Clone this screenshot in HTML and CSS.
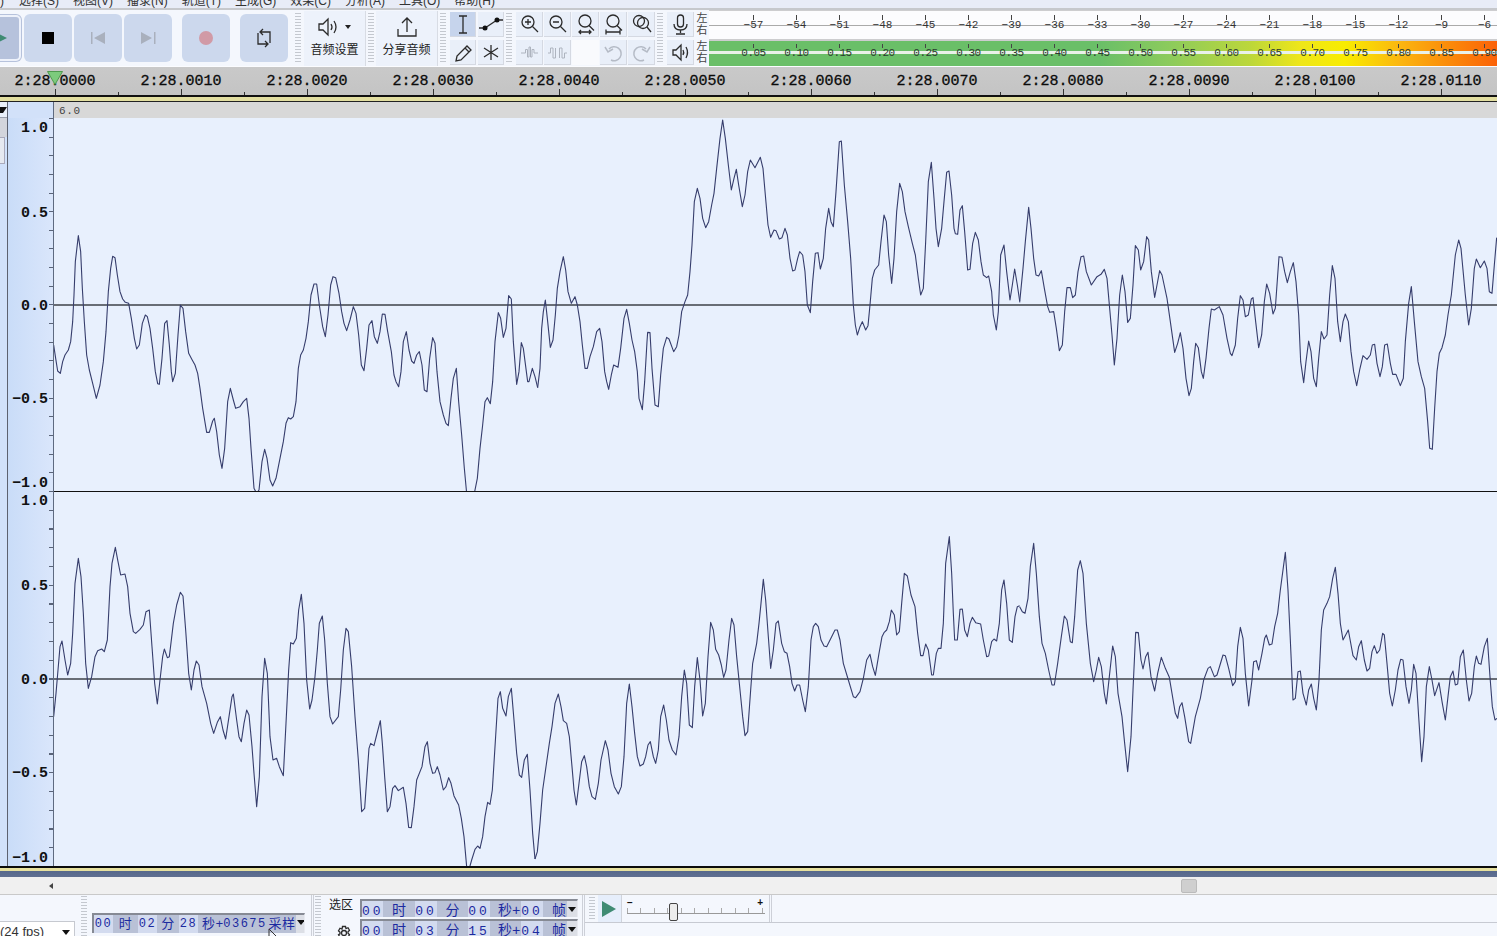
FILE: index.html
```html
<!DOCTYPE html>
<html lang="zh">
<head>
<meta charset="utf-8">
<title>Audacity</title>
<link rel="stylesheet" href="styles.css">
</head>
<body>
<div class="app">
  <nav class="menubar">
    <span class="menu-stub">)</span><span>选择(S)</span><span>视图(V)</span><span>播录(N)</span><span>轨道(T)</span><span>生成(G)</span><span>效果(C)</span><span>分析(A)</span><span>工具(O)</span><span>帮助(H)</span>
  </nav>

  <div class="toolbar">
    <div class="transport">
      <button class="tbtn tbtn-play"><svg width="48" height="48" viewBox="0 0 48 48"><path class="green" d="M23 19l10 5-10 5z"/></svg></button>
      <button class="tbtn"><svg width="48" height="48" viewBox="0 0 48 48"><rect x="18" y="18" width="12" height="12" fill="#000"/></svg></button>
      <button class="tbtn"><svg width="48" height="48" viewBox="0 0 48 48"><path class="dim" d="M17 18h1.500v12H17zM31 18v12l-11-6z"/></svg></button>
      <button class="tbtn"><svg width="48" height="48" viewBox="0 0 48 48"><path class="dim" d="M30 18h1.500v12H30zM17 18v12l11-6z"/></svg></button>
      <button class="tbtn tbtn-rec"><svg width="48" height="48" viewBox="0 0 48 48"><circle cx="24" cy="24" r="7" fill="#d19aa6"/></svg></button>
      <button class="tbtn"><svg width="48" height="48" viewBox="0 0 48 48"><path class="ic" d="M21 18h9v11M27 30h-9V19M23 15l-3 3 3 3M25 27l3 3-3 3"/></svg></button>
    </div>
    <div class="grip"></div>
    <button class="bigbtn">
      <svg width="40" height="24" viewBox="0 0 40 24"><path class="ic" d="M4 9h4l5-5v16l-5-5H4zM16 9q2 3 0 6M19 6q4 6 0 12"/><path d="M30 10h6l-3 4z" fill="#222"/></svg>
      <span>音频设置</span>
    </button>
    <div class="grip grip-narrow"></div>
    <button class="bigbtn">
      <svg width="40" height="24" viewBox="0 0 40 24"><path class="ic" d="M20 17V3M15 8l5-5 5 5M11 14v7h18v-7"/></svg>
      <span>分享音频</span>
    </button>
    <div class="grip grip-wide"></div>
    <div class="tools">
      <button class="sbtn active"><svg width="26" height="25" viewBox="0 0 26 25"><path class="ic" d="M9 4h8M13 4v17M9 21h8"/></svg></button>
      <button class="sbtn"><svg width="26" height="25" viewBox="0 0 26 25"><path class="ic" d="M7 16L19 8"/><circle cx="7" cy="16" r="2.500" fill="#111"/><circle cx="19" cy="8" r="2.500" fill="#111"/><path class="ic" d="M1 16h4M21 8h4"/></svg></button>
      <button class="sbtn"><svg width="26" height="25" viewBox="0 0 26 25"><path class="ic" d="M6 21l1-5L17 6l4 4L11 20zM15 8l4 4"/></svg></button>
      <button class="sbtn"><svg width="26" height="25" viewBox="0 0 26 25"><path class="ic" d="M13 5v15M6 8l14 9M20 8L6 17"/></svg></button>
    </div>
    <div class="grip grip-wide"></div>
    <div class="zooms">
      <button class="sbtn"><svg width="27" height="25" viewBox="0 0 27 25"><circle class="ic" cx="12" cy="10" r="6"/><path class="ic" d="M16.500 14.500l5.500 5.500M9 10h6M12 7v6"/></svg></button>
      <button class="sbtn"><svg width="27" height="25" viewBox="0 0 27 25"><circle class="ic" cx="12" cy="10" r="6"/><path class="ic" d="M16.500 14.500l5.500 5.500M9 10h6"/></svg></button>
      <button class="sbtn"><svg width="27" height="25" viewBox="0 0 27 25"><circle class="ic" cx="13" cy="9" r="6"/><path class="ic" d="M17 13.500l5 5M7 20h12M9 18l-2 2 2 2M17 18l2 2-2 2"/></svg></button>
      <button class="sbtn"><svg width="27" height="25" viewBox="0 0 27 25"><circle class="ic" cx="13" cy="9" r="6"/><path class="ic" d="M17 13.500l5 5M6 20h14M6 17.500v5M20 17.500v5"/></svg></button>
      <button class="sbtn"><svg width="27" height="25" viewBox="0 0 27 25"><circle class="ic" cx="11" cy="9" r="5.500"/><circle class="ic" cx="15" cy="11" r="5.500"/><path class="ic" d="M19 15l4 5"/></svg></button>
      <button class="sbtn"><svg width="27" height="25" viewBox="0 0 27 25"><path class="ic-dim" d="M5 13h4.500V9.500h2V17h1.500V7h1.500v10h1.500V9.500h2V13h4"/></svg></button>
      <button class="sbtn"><svg width="27" height="25" viewBox="0 0 27 25"><path class="ic-dim" d="M4 13h2.500V8H9v10h2.500V8M15.500 18V8H18v10h2.500v-5H23"/></svg></button>
      <div class="sgap"></div>
      <button class="sbtn"><svg width="27" height="25" viewBox="0 0 27 25"><path class="ic-dim ic-undo" d="M9 9a7 7 0 1 1 2 11M5 7l3 5 5-3"/></svg></button>
      <button class="sbtn"><svg width="27" height="25" viewBox="0 0 27 25"><path class="ic-dim ic-undo" d="M18 9a7 7 0 1 0-2 11M22 7l-3 5-5-3"/></svg></button>
    </div>
    <div class="grip"></div>
    <div class="io">
      <button class="sbtn"><svg width="27" height="25" viewBox="0 0 27 25"><rect class="ic" x="10.500" y="3" width="6" height="12" rx="3"/><path class="ic" d="M7 12q0 6 6.500 6T20 12M13.500 18v3M9 22h9"/></svg></button>
      <div class="lr"><span>左</span><span>右</span></div>
      <button class="sbtn"><svg width="27" height="25" viewBox="0 0 27 25"><path class="ic" d="M6 10h3l5-5v15l-5-5H6zM16 10q1.500 2.500 0 5M19 7q3 5.500 0 11"/></svg></button>
      <div class="lr"><span>左</span><span>右</span></div>
    </div>
    <div class="meters">
      <div class="meter meter-in">
        <span>−57</span><span>−54</span><span>−51</span><span>−48</span><span>−45</span><span>−42</span><span>−39</span><span>−36</span><span>−33</span><span>−30</span><span>−27</span><span>−24</span><span>−21</span><span>−18</span><span>−15</span><span>−12</span><span>−9</span><span>−6</span>
      </div>
      <div class="meter meter-out">
        <span>0.05</span><span>0.10</span><span>0.15</span><span>0.20</span><span>0.25</span><span>0.30</span><span>0.35</span><span>0.40</span><span>0.45</span><span>0.50</span><span>0.55</span><span>0.60</span><span>0.65</span><span>0.70</span><span>0.75</span><span>0.80</span><span>0.85</span><span>0.90</span>
      </div>
    </div>
  </div>

  <div class="timeline">
    <span>2:28.0000</span><span>2:28.0010</span><span>2:28.0020</span><span>2:28.0030</span><span>2:28.0040</span><span>2:28.0050</span><span>2:28.0060</span><span>2:28.0070</span><span>2:28.0080</span><span>2:28.0090</span><span>2:28.0100</span><span>2:28.0110</span>
    <svg class="playhead" width="16" height="14" viewBox="0 0 16 14"><path d="M.5.500h15L8 13.500z" fill="#7ccb7c" stroke="#4f9a4f"/></svg>
  </div>
  <div class="timeline-edge"></div>

  <div class="track">
    <div class="ctrl">
      <div class="ctrl-head"><i class="ctrl-caret"></i></div>
      <div class="ctrl-bar"></div>
      <div class="ctrl-btn"></div>
    </div>
    <div class="vruler">
      <div class="vhead"></div>
      <div class="vch vch-top"><b>1.0</b><b>0.5</b><b>0.0</b><b>−0.5</b><b>−1.0</b></div>
      <div class="vch vch-bot"><b>1.0</b><b>0.5</b><b>0.0</b><b>−0.5</b><b>−1.0</b></div>
    </div>
    <div class="waves">
      <div class="wave-head">6.0</div>
      <svg class="wave wave-top" width="1443" height="373" viewBox="54 118 1443 373">
        <path class="zero" d="M54 305H1497"/>
        <g transform="translate(50 115) scale(.33333)">
          <polyline points="11,690 17,730 23,768 31,775 38,740 45,720 55,705 62,680 68,620 72,540 76,440 85,362 92,410 97,520 103,620 110,720 118,765 128,805 139,850 150,810 160,740 168,650 175,530 182,460 188,424 195,428 202,480 210,530 218,552 226,562 236,565 244,610 253,670 260,702 268,690 277,625 286,600 292,605 300,640 308,700 316,770 323,806 328,808 336,730 344,625 351,617 358,690 364,770 368,800 376,775 384,660 391,570 399,580 407,650 416,715 425,732 435,750 443,775 450,820 458,880 470,952 478,952 488,918 493,910 500,950 508,1020 516,1060 524,1000 533,860 541,820 550,855 557,880 570,875 580,860 590,850 597,910 603,1000 612,1120 620,1135 627,1125 636,1040 644,1003 651,1030 660,1095 668,1113 678,1090 690,1030 700,980 708,925 715,908 722,912 730,905 738,860 745,760 752,720 760,705 768,670 775,620 783,540 792,507 800,507 808,570 818,635 826,665 834,600 842,510 849,485 857,488 867,535 875,590 882,625 890,647 900,615 910,575 918,595 926,660 934,750 942,767 950,700 957,630 966,617 973,665 982,685 990,650 997,597 1005,598 1013,650 1024,710 1032,780 1038,800 1046,815 1053,770 1060,680 1069,650 1077,705 1085,738 1092,745 1100,720 1108,710 1116,750 1123,825 1131,830 1139,730 1148,668 1155,685 1161,770 1170,860 1180,900 1188,925 1195,932 1203,850 1210,790 1219,760 1226,860 1235,960 1243,1060 1250,1135 1273,1135 1282,1090 1290,1000 1298,930 1305,860 1312,848 1321,866 1328,800 1335,680 1345,593 1352,610 1360,667 1368,640 1376,542 1384,552 1390,680 1400,808 1407,770 1414,683 1420,700 1433,800 1437,800 1447,760 1455,785 1463,818"/>
        </g>
        <g transform="translate(530 115) scale(.33333)">
          <polyline points="23,818 30,760 35,640 40,590 46,555 53,620 61,697 69,675 76,600 82,520 90,470 100,425 107,465 114,530 124,565 135,545 142,570 150,620 157,690 165,760 172,760 180,725 190,695 200,650 209,640 216,680 224,770 230,800 236,823 244,780 251,750 264,757 272,700 282,610 290,583 298,625 306,675 314,710 322,770 327,850 337,884 344,800 351,680 353,652 360,653 366,760 375,870 385,875 392,780 400,700 410,667 417,672 431,710 440,695 447,660 455,590 465,560 473,540 480,470 486,390 493,260 502,220 510,250 518,310 527,338 536,320 545,270 552,235 560,160 570,70 578,15 586,70 595,150 604,225 612,190 619,163 626,210 637,275 645,240 653,170 661,135 675,158 691,127 699,160 706,240 714,330 722,367 732,345 738,347 748,372 756,368 765,340 772,360 780,430 788,468 795,465 803,430 809,410 818,420 825,470 832,570 841,593 848,500 856,415 864,413 871,462 880,430 887,340 896,280 903,320 910,335 918,230 928,80 934,78 943,210 953,320 962,430 970,570 976,630 982,660 990,635 997,620 1007,645 1014,632 1020,570 1027,490 1034,465 1046,450 1053,380 1062,300 1069,320 1076,420 1085,505 1092,430 1100,290 1109,205 1117,230 1125,290 1135,335 1147,385 1156,420 1165,490 1172,540 1180,520 1187,380 1195,200 1204,142 1212,250 1218,340 1225,395 1235,340 1242,260 1250,172 1257,168 1265,240 1272,340 1276,356 1283,358 1290,285 1297,272 1304,350 1313,465 1320,463 1328,385 1336,352 1345,375 1353,440 1360,480 1370,488 1376,483 1385,530 1390,600 1399,645 1405,590 1412,420 1422,390 1430,470 1440,555 1447,510 1454,462 1462,510 1469,558"/>
        </g>
        <g transform="translate(1007 115) scale(.33333)">
          <polyline points="38,562 48,460 55,380 65,277 72,340 80,430 87,480 95,483 103,467 112,520 122,575 128,592 140,590 148,640 157,707 166,690 173,590 180,518 190,518 197,548 205,540 213,470 222,425 230,423 238,470 253,510 270,485 282,478 292,463 300,490 308,580 315,660 322,750 330,670 338,540 346,480 354,530 362,622 370,610 378,510 385,392 394,405 401,465 410,440 419,365 425,375 433,470 443,547 450,510 458,467 465,480 480,550 490,620 503,712 512,685 520,653 528,700 537,790 546,842 553,820 560,740 566,685 574,698 583,770 589,790 597,730 606,640 613,582 622,585 637,575 648,600 660,670 670,715 675,722 685,690 692,610 700,542 708,555 715,605 724,600 733,552 738,548 746,620 755,698 764,660 772,560 779,507 788,535 798,597 805,580 816,425 825,427 833,470 841,503 850,470 859,443 867,500 875,600 881,740 890,803 897,740 905,678 912,710 920,790 928,815 935,730 943,650 951,672 960,660 968,540 976,452 984,490 992,620 1000,680 1008,620 1015,597 1024,620 1032,710 1040,770 1049,812 1058,765 1068,722 1080,733 1090,720 1096,690 1103,688 1110,745 1119,785 1126,755 1133,690 1141,687 1150,745 1157,778 1167,778 1180,812 1189,790 1195,680 1205,565 1213,515 1222,620 1233,740 1243,785 1253,820 1262,920 1268,1000 1276,1003 1283,880 1290,770 1297,715 1305,698 1315,660 1323,600 1333,540 1345,420 1355,375 1362,400 1375,540 1385,630 1393,580 1402,460 1408,432 1420,458 1432,438 1440,460 1447,530 1455,535 1462,450 1469,368"/>
        </g>
      </svg>
      <svg class="wave wave-bot" width="1443" height="375" viewBox="54 491 1443 375">
        <path class="zero" d="M54 679H1497"/>
        <g transform="translate(50 490) scale(.33333)">
          <polyline points="11,680 18,610 24,540 30,470 36,453 45,510 53,555 62,520 68,430 75,280 85,205 93,260 100,370 107,520 115,595 125,560 135,500 143,482 155,477 163,485 172,450 180,290 186,220 196,172 204,215 212,255 225,252 233,290 240,370 250,425 257,430 270,418 280,405 288,365 298,360 306,470 314,580 322,642 330,570 338,500 343,477 352,503 358,500 370,400 380,345 391,307 399,318 407,420 416,550 424,600 432,540 439,513 447,525 456,590 470,640 482,700 491,730 502,697 511,680 519,720 527,747 537,680 546,620 550,612 560,690 567,740 574,755 582,700 590,660 597,675 606,770 612,850 620,950 628,860 636,620 644,505 652,550 660,740 669,810 680,805 688,830 700,857 708,700 716,540 722,458 730,462 739,445 746,360 754,313 762,400 770,570 779,657 786,630 795,560 802,480 808,400 817,378 824,450 832,580 840,680 848,702 865,680 872,600 880,480 888,415 895,425 905,530 915,680 925,810 935,965 944,955 950,870 957,775 962,760 972,767 980,735 991,692 997,760 1004,860 1012,965 1020,950 1028,895 1035,887 1045,902 1060,892 1068,940 1076,1012 1084,1013 1092,950 1100,870 1116,830 1125,770 1132,755 1140,820 1148,850 1155,848 1162,830 1170,855 1180,900 1188,890 1196,863 1203,880 1212,918 1226,945 1234,985 1242,1040 1250,1130 1258,1135 1265,1110 1275,1078 1283,1068 1290,1075 1298,1040 1305,980 1313,937 1320,943 1327,900 1335,770 1344,625 1351,605 1358,655 1368,678 1375,620 1384,595 1392,690 1400,790 1408,855 1415,862 1423,810 1432,793 1440,900 1448,1030 1455,1107"/>
        </g>
        <g transform="translate(530 490) scale(.33333)">
          <polyline points="15,1107 22,1085 30,1000 38,900 48,830 58,760 66,710 75,640 85,612 93,650 100,692 110,700 118,740 126,830 132,900 139,945 147,880 155,815 163,797 170,830 178,890 186,920 196,928 205,880 213,810 226,752 234,780 243,850 253,890 265,912 274,890 282,800 290,640 298,582 306,650 314,730 322,800 330,828 340,822 347,800 354,765 361,755 370,800 377,820 385,780 392,680 401,645 409,690 417,750 427,780 438,795 447,740 455,620 463,540 470,580 478,705 487,713 494,590 502,503 510,570 518,678 526,640 534,500 542,397 550,420 557,478 566,495 574,525 581,562 588,540 597,450 605,385 612,405 620,500 630,600 638,680 645,737 653,725 662,600 668,520 680,460 687,400 693,340 700,268 707,330 715,440 722,535 730,480 738,400 745,393 755,460 763,485 771,490 779,530 786,580 794,603 801,585 809,585 818,630 826,665 835,590 843,450 850,410 857,400 865,410 873,450 882,468 890,470 905,440 915,420 922,420 930,450 940,520 955,570 970,620 977,623 990,605 1000,565 1010,510 1020,493 1028,530 1036,556 1047,490 1056,440 1062,428 1070,420 1078,395 1084,360 1093,375 1100,435 1108,425 1115,340 1123,250 1132,258 1143,315 1155,350 1163,430 1172,497 1179,497 1187,462 1195,480 1205,555 1210,555 1219,490 1225,475 1233,475 1240,400 1247,220 1258,140 1265,250 1270,370 1274,450 1282,450 1290,358 1297,357 1304,420 1312,440 1320,400 1327,382 1337,398 1352,402 1360,450 1370,500 1376,498 1385,455 1392,447 1400,453 1408,400 1415,300 1422,270 1430,340 1438,450 1447,457 1455,380 1462,350 1469,347"/>
        </g>
        <g transform="translate(1007 490) scale(.33333)">
          <polyline points="38,350 46,365 54,370 63,325 70,230 80,160 88,250 97,380 105,460 115,490 125,540 135,585 142,585 152,520 163,440 172,378 180,390 190,455 196,458 203,380 212,240 220,212 228,250 238,400 250,520 260,575 268,540 275,502 283,530 292,610 298,642 307,560 317,468 325,500 333,610 345,680 353,760 362,845 372,740 378,600 386,427 394,428 402,510 408,537 416,500 423,487 432,560 443,603 452,550 463,502 475,535 487,562 495,610 505,670 512,685 518,650 525,638 533,680 545,755 551,760 565,680 580,625 590,570 603,535 610,530 622,560 630,555 648,495 655,497 665,535 677,587 685,575 692,470 700,412 708,445 715,550 725,648 735,570 740,515 748,512 755,540 765,490 773,445 778,435 787,465 795,462 803,410 812,370 820,300 835,187 843,300 850,450 858,630 865,625 873,545 880,543 888,610 898,645 905,600 913,582 920,625 928,660 936,570 943,420 950,360 960,340 968,320 977,265 985,232 993,310 1000,400 1008,450 1024,420 1038,497 1048,510 1055,470 1063,452 1072,510 1080,543 1088,535 1095,485 1102,467 1110,490 1118,480 1127,430 1132,435 1140,520 1148,610 1156,648 1165,600 1173,540 1181,508 1188,510 1197,590 1206,640 1213,600 1220,523 1227,550 1235,680 1244,815 1251,740 1258,590 1267,530 1275,570 1283,617 1296,578 1306,640 1315,690 1323,620 1330,560 1338,543 1345,585 1352,582 1360,500 1369,480 1378,570 1386,633 1394,610 1402,530 1408,498 1415,520 1422,523 1432,470 1441,445 1449,560 1456,650 1464,690 1470,685"/>
        </g>
      </svg>
    </div>
  </div>

  <div class="track-edge"></div>

  <div class="hscroll">
    <i class="scroll-left"></i>
    <i class="scroll-thumb"></i>
  </div>

  <div class="statusbar">
    <div class="rate"><div class="rate-select">(24 fps)<i class="caret"></i></div></div>
    <div class="grip grip-low"></div>
    <div class="pos">
      <div class="tbox tbox-pos">
        <span class="lt">00</span><span>时</span><span class="lt">02</span><span>分</span><span class="lt">28</span><span class="sec">秒+</span><span class="lt num">03675</span><span class="unit-s">采样</span><span class="drop"><i class="caret"></i></span>
      </div>
    </div>
    <div class="vsep"></div>
    <div class="grip grip-low"></div>
    <div class="selection">
      <div class="sel-labels">
        <span>选区</span>
        <svg width="16" height="16" viewBox="0 0 16 16"><circle class="ic" cx="8" cy="8" r="2.500"/><path class="ic" d="M6.500 1.500h3l.5 2 2-.8 1.500 2.600-1.500 1.400v1.600l1.500 1.400-1.500 2.600-2-.8-.5 2h-3l-.5-2-2 .8-1.500-2.600L4 8.800V7.200L2.500 5.800 4 3.200l2 .8z"/></svg>
      </div>
      <div class="sel-boxes">
        <div class="tbox tbox-sel">
          <span class="lt">00</span><span>时</span><span class="lt">00</span><span>分</span><span class="lt">00</span><span class="sec">秒+</span><span class="lt">00</span><span class="fr">帧</span><span class="drop"><i class="caret"></i></span>
        </div>
        <div class="tbox tbox-sel">
          <span class="lt">00</span><span>时</span><span class="lt">03</span><span>分</span><span class="lt">15</span><span class="sec">秒+</span><span class="lt">04</span><span class="fr">帧</span><span class="drop"><i class="caret"></i></span>
        </div>
      </div>
    </div>
    <div class="vsep"></div>
    <div class="playbar">
      <div class="grip grip-play"></div>
      <button class="playbtn"><svg width="24" height="26" viewBox="0 0 24 26"><path d="M4 5l14 8-14 8z" fill="#3f8b73"/></svg></button>
      <div class="slider">
        <div class="slider-signs"><span>−</span><span>+</span></div>
        <div class="slider-track"></div>
        <i class="slider-thumb"></i>
      </div>
      <div class="vsep vsep-play"></div>
      <div class="playbar-rest"></div>
    </div>
    <svg class="pointer" width="10" height="8" viewBox="0 0 10 8"><path d="M1 0v8M1 0l7 7" fill="none" stroke="#333"/></svg>
  </div>
</div>
</body>
</html>
```

FILE: styles.css
```css
* { box-sizing: border-box; }
html, body { margin: 0; padding: 0; height: 100%; overflow: hidden; background: #f4f7fd; }
body { font-family: "Liberation Sans", "Noto Sans CJK SC", sans-serif; color: #222; }
button { border: 0; padding: 0; margin: 0; font: inherit; color: inherit; display: block; }
svg { display: block; }

.app { width: 1497px; height: 936px; overflow: hidden; position: relative; display: flex; flex-direction: column; }

.ic { fill: none; stroke: #2b2b2b; stroke-width: 1.3; }
.ic-dim { fill: none; stroke: #aeb4bf; stroke-width: 1; }
.ic-undo { stroke: #b5bbc6; stroke-width: 1.500; }
.dim { fill: #a9b0bd; }
.green { fill: #3f8b73; }

/* menu */
.menubar {
  height: 10px; flex: none; overflow: hidden; display: flex; align-items: flex-end;
  background: #e8ecf7; border-bottom: 2px solid #c6c8cc; font-size: 12px; line-height: 16px; color: #333; padding-left: 19px; gap: 14px;
}
.menubar span { display: block; height: 16px; margin-bottom: -1px; white-space: nowrap; flex: none; }
.menubar .menu-stub { margin-left: -19px; margin-right: -14px; width: 19px; }

/* toolbar */
.toolbar { height: 56px; flex: none; display: flex; background: #f4f7fd; overflow: hidden; }
.transport { width: 293px; flex: none; display: flex; gap: 2px; padding-top: 4px; margin-left: -26px; flex-basis: 319px; }
.tbtn { width: 48px; height: 48px; background: #ccd8ed; border-radius: 6px; flex: none; }
.tbtn-play { background: #b6c2dc; outline: 2px solid #eef2fb; outline-offset: -3px; }
.tbtn-rec { margin-left: 8px; }
.transport .tbtn:last-child { margin-left: 8px; }
.grip { width: 10px; flex: none; position: relative; }
.grip-narrow { width: 9px; }
.grip-wide { width: 11px; }
.grip::after {
  content: ""; position: absolute; left: 2px; width: 6px; top: 3px; bottom: 2px;
  background: repeating-linear-gradient(#c4c8cf 0 1px, transparent 1px 3px);
}
.bigbtn { width: 62px; flex: none; background: #edf2fb; border-right: 1px solid #d8dce4; margin: 1px 0 0 1px; padding-top: 4px; display: flex; flex-direction: column; align-items: center; font-size: 12px; line-height: 16px; }
.bigbtn svg { margin-bottom: 3px; }
.tools { width: 55px; flex: none; display: grid; grid-template-columns: 26px 26px; gap: 3px 2px; padding: 2px 0 0 1px; align-content: start; }
.zooms { width: 140px; flex: none; display: grid; grid-template-columns: repeat(5, 27px); gap: 3px 1px; padding: 2px 0 0 1px; align-content: start; }
.sbtn { height: 25px; background: #e9eff9; border-right: 1px solid #d5d9e2; border-bottom: 1px solid #d5d9e2; }
.sbtn.active { background: #c6d4ec; }
.sgap { height: 25px; background: #f9fafd; }
.io { width: 43px; flex: none; display: grid; grid-template-columns: 27px 14px; gap: 3px 1px; padding: 2px 0 0 1px; align-content: start; margin-left: 1px; }
.lr { height: 25px; display: flex; flex-direction: column; align-items: center; justify-content: space-between; font-size: 11px; line-height: 12px; color: #444; padding: 0 0 1px; }

.meters { flex: 1; min-width: 0; display: flex; flex-direction: column; gap: 2px; padding-top: 1px; background: #cdcdcf; overflow: hidden; }
.meter { display: flex; padding-left: 23px; overflow: hidden; font-family: "Liberation Mono", monospace; font-size: 11px; color: #333; }
.meter span { width: 43px; flex: none; text-align: center; position: relative; white-space: nowrap; }
.meter span::before { content: ""; position: absolute; left: 21px; width: 1px; height: 5px; background: #444; }
.meter-in { height: 28px; background: linear-gradient(transparent 14px, #aaa 14px 15px, transparent 15px), #fcfcfe; padding-top: 8px; line-height: 12px; }
.meter-in span::before { top: -4px; }
.meter-out {
  height: 25px; padding-top: 6px; line-height: 12px; letter-spacing: -.5px; color: #2c3a30;
  background: linear-gradient(transparent 10px, #e9f1e9 10px 13px, transparent 13px),
    linear-gradient(90deg, #6abf68 0, #6abf68 49.600%, #8ccb5c 58.500%, #bcd73a 68.700%, #eee61a 75%, #f8ec00 80.700%, #fbb610 87.700%, #fb8a0a 94%, #fb6208 100%);
}
.meter-out span::before { top: -3px; height: 4px; }

/* timeline */
.timeline {
  height: 29px; flex: none; display: flex; position: relative; margin-left: -8px; width: 1520px;
  border-top: 1px solid #fbfcff;
  background: linear-gradient(#c9c9c9, #c4c4c4);
  font-family: "Liberation Mono", monospace; font-size: 15px; line-height: 24px; color: #0b0b0b; -webkit-text-stroke: .3px #0b0b0b;
}
.timeline span { width: 126px; flex: none; text-align: center; position: relative; padding-top: 3px; }
.timeline span::before { content: ""; position: absolute; left: 0; bottom: 0; width: 1px; height: 3px; background: #333; }
.timeline span::after { content: ""; position: absolute; left: 63px; bottom: 0; width: 1px; height: 6px; background: #333; }
.playhead { position: absolute; left: 55px; top: 4px; }
.timeline-edge { height: 7px; flex: none; border-top: 2px solid #111; border-bottom: 1px solid #222; background: #e2dea0; }

/* track */
.track { height: 764px; flex: none; display: flex; }
.ctrl { width: 8px; flex: none; background: #d1e1fa; border-right: 1px solid #5d6270; }
.ctrl-head { height: 16px; background: #eaf0fa; padding-top: 5px; border-bottom: 1px solid #9aa0ad; }
.ctrl-caret { display: block; width: 0; height: 0; border-left: 4px solid #111; border-right: 4px solid transparent; border-top: 6px solid #111; margin-left: -1px; }
.ctrl-bar { height: 19px; background: #d3d5dc; }
.ctrl-btn { height: 27px; width: 5px; background: #e6e9f0; border: 1px solid #aab; border-left: 0; }
.vruler { width: 46px; flex: none; background: linear-gradient(90deg, #c9dcf8, #dae6fb); border-right: 1px solid #5e6a80; }
.vhead { height: 16px; background: #d2e1f9; }
.vch {
  display: flex; flex-direction: column; align-items: flex-end; padding: 2px 5px 0 0;
  background-repeat: no-repeat; background-position: right top; background-size: 4px 100%;
}
.vch-top { height: 373px; background-image: repeating-linear-gradient(#5a6478 0 1px, transparent 1px 18.64px); }
.vch-bot { height: 375px; background-image: repeating-linear-gradient(#5a6478 0 1px, transparent 1px 18.75px); }
.vch b { display: block; height: 18px; line-height: 18px; font-family: "Liberation Mono", monospace; font-weight: 700; font-size: 15px; color: #111; white-space: nowrap; }
.vch b + b { margin-top: 75px; }
.vch b:nth-child(2) { margin-top: 67px; }
.vch b:last-child { margin-top: 66px; }
.vch-bot b + b { margin-top: 75.500px; }
.vch-bot b:nth-child(2), .vch-bot b:last-child { margin-top: 67px; }

.waves { flex: 1; min-width: 0; background: #e8f0fd; }
.wave-head { height: 16px; background: #d8d8d8; font-family: "Liberation Mono", monospace; font-size: 11px; line-height: 19px; padding-left: 5px; color: #444; letter-spacing: .6px; }
.wave { background: #e8f0fd; }
.wave polyline { fill: none; stroke: #363d6c; stroke-width: 1.100; vector-effect: non-scaling-stroke; stroke-linejoin: round; }
.wave .zero { stroke: #3e4247; stroke-width: 1.300; fill: none; }
.wave-top { box-shadow: 0 1px 0 #111; position: relative; z-index: 1; }

.track-edge { height: 11px; flex: none; border-top: 2px solid #0b0b0b; background: linear-gradient(#e6e09e 0 3px, #56688c 3px, #5f6f91 100%); }

/* scrollbar */
.hscroll { height: 18px; flex: none; background: #f0f0f0; border-bottom: 1px solid #c9c9c9; display: flex; align-items: center; padding-left: 49px; position: relative; }
.scroll-left { width: 0; height: 0; border-right: 4px solid #444; border-top: 3px solid transparent; border-bottom: 3px solid transparent; }
.scroll-thumb { width: 16px; height: 14px; margin-left: 1128px; background: #cfcfcf; border: 1px solid #bbb; border-radius: 2px; }

/* status */
.statusbar { flex: 1; min-height: 0; display: flex; background: #f4f7fd; position: relative; }
.rate { width: 80px; flex: none; padding-top: 26px; }
.rate-select { width: 75px; height: 30px; background: #fff; border: 1px solid #c6c9d0; border-left: 0; font-size: 13px; line-height: 20px; color: #333; position: relative; white-space: nowrap; }
.caret { display: block; width: 0; height: 0; border-left: 4px solid transparent; border-right: 4px solid transparent; border-top: 5px solid #111; }
.rate-select .caret { position: absolute; right: 4px; top: 8px; }
.grip-low::after { top: 1px; bottom: 0; left: 1px; }
.pos { width: 221px; flex: none; padding: 18px 0 0 2px; }
.vsep { width: 3px; flex: none; border-left: 1px solid #cdd0d8; border-right: 1px solid #cdd0d8; }
.tbox {
  display: grid; background: #b9c1d6; color: #1c2aa0; font-family: "Liberation Mono", "Noto Sans CJK SC", monospace;
  border-top: 2px solid #868a94; border-left: 2px solid #868a94; border-right: 1px solid #e8eaf0;
  text-align: center; white-space: nowrap; overflow: hidden;
}
.tbox span { display: block; }
.tbox .lt { background: #d3dbef; }
.tbox-pos { width: 213px; height: 20px; font-size: 12px; line-height: 19px; letter-spacing: 1.500px; grid-template-columns: 19px 25px 19px 22px 19px 25px 44px 30px 7px; }
.tbox-pos span:not(.lt) { font-size: 13px; letter-spacing: .5px; }
.tbox .num { background: transparent; }
.tbox-pos .sec { text-align: left; padding-left: 4px; letter-spacing: -1px; }
.tbox-pos .unit-s { font-size: 12px; letter-spacing: 0; }
.tbox-sel { width: 218px; height: 22px; font-size: 13px; line-height: 21px; letter-spacing: 3px; grid-template-columns: 21px 32px 22px 31px 22px 31px 22px 24px 10px; }
.tbox-sel span:not(.lt) { font-size: 14px; letter-spacing: 0; }
.tbox-sel .sec { text-align: left; padding-left: 8px; letter-spacing: -1px; }
.tbox-sel .fr { text-align: right; padding-right: 1px; }
.drop { background: #dcdfe6; padding: 6px 0 0 1px; }
.tbox-pos .drop { padding-top: 5px; margin-left: -1px; }
.selection { width: 258px; flex: none; display: flex; padding: 4px 0 0 1px; }
.sel-labels { width: 35px; flex: none; display: flex; flex-direction: column; font-size: 12px; line-height: 13px; color: #222; padding-left: 4px; }
.sel-labels svg { flex: none; margin: 13px 0 0 7px; }
.sel-boxes { display: flex; flex-direction: column; gap: 2px; }
.playbar { flex: 1; min-width: 0; display: flex; height: 28px; border-bottom: 1px solid #c7cad2; }
.grip-play { width: 13px; }
.grip-play::after { left: 4px; width: 6px; top: 2px; bottom: 3px; }
.playbtn { width: 24px; height: 27px; flex: none; background: #e6eefb; border-right: 1px solid #cfd3db; }
.slider { width: 150px; flex: none; position: relative; padding: 3px 8px 0 5px; }
.slider-signs { display: flex; justify-content: space-between; font-size: 10px; line-height: 9px; font-weight: 700; color: #111; padding: 0 1px 0 0; }
.slider-track { margin-top: 1px; height: 6px; border-bottom: 1px solid #999; background: repeating-linear-gradient(90deg, #aaa 0 1px, transparent 1px 13.500px); width: 138px; }
.slider-thumb { position: absolute; left: 47px; top: 8px; width: 9px; height: 18px; background: #ececec; border: 1px solid #444; border-radius: 2px; }
.vsep-play { margin-left: -3px; }
.playbar-rest { flex: 1; }
.pointer { position: absolute; left: 268px; top: 34px; }
```
